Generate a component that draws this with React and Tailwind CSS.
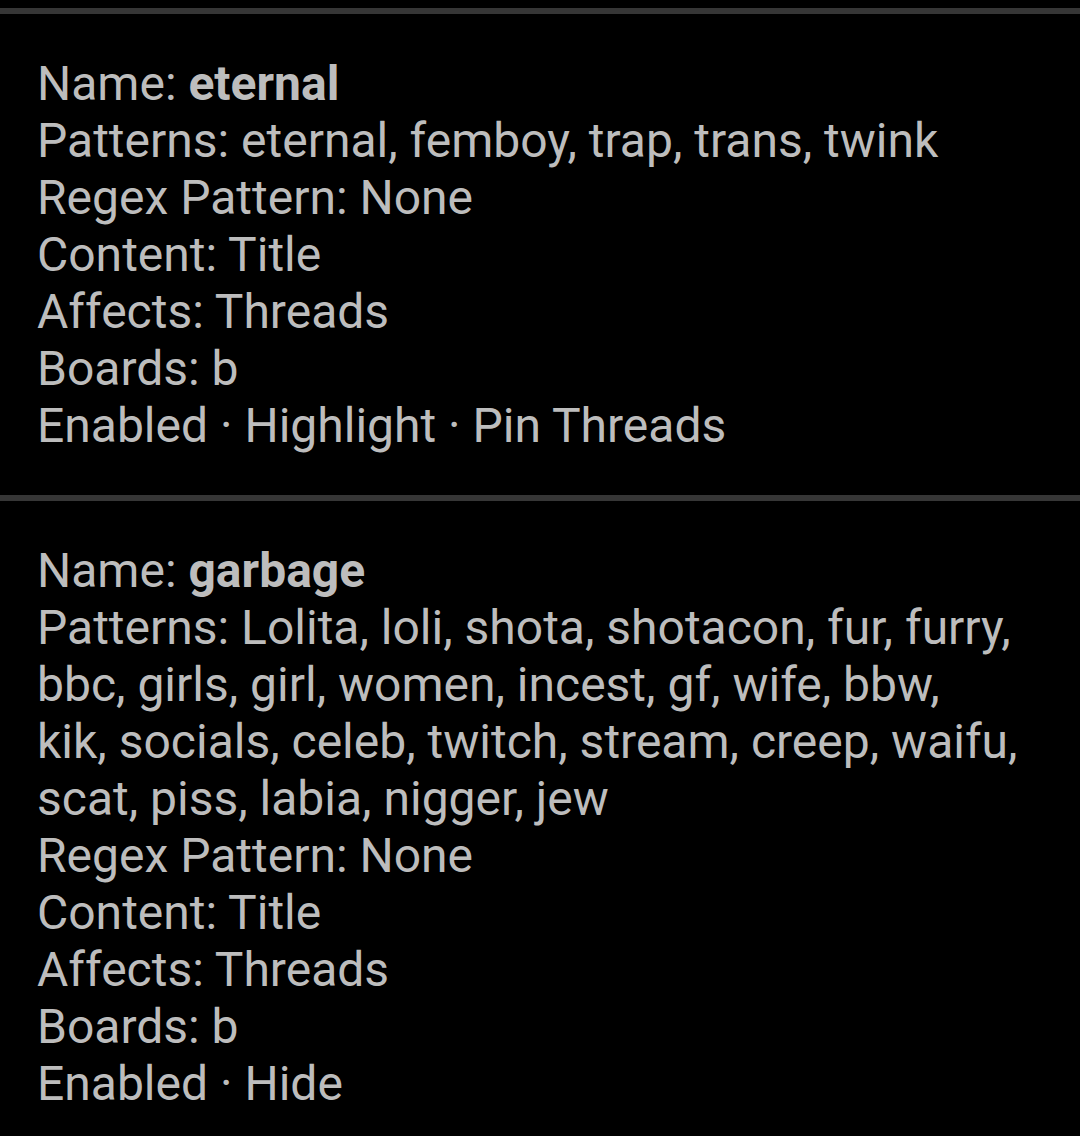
import React from 'react';

const filters = [
    {
        name: 'eternal',
        patterns: ['Patterns: eternal, femboy, trap, trans, twink'],
        regex: 'None',
        content: 'Title',
        affects: 'Threads',
        boards: 'b',
        flags: 'Enabled · Highlight · Pin Threads',
    },
    {
        name: 'garbage',
        patterns: [
            'Patterns: Lolita, loli, shota, shotacon, fur, furry,',
            'bbc, girls, girl, women, incest, gf, wife, bbw,',
            'kik, socials, celeb, twitch, stream, creep, waifu,',
            'scat, piss, labia, nigger, jew',
        ],
        regex: 'None',
        content: 'Title',
        affects: 'Threads',
        boards: 'b',
        flags: 'Enabled · Hide',
    },
];

const FilterItem = ({ filter }) => {
    return (
        <div className="border-t-[6px] border-[#363636] pt-[41px] pb-[41px] px-[37px]">
            <div>
                Name: <span className="font-bold">{filter.name}</span>
            </div>
            {filter.patterns.map((line, i) => (
                <div key={i}>{line}</div>
            ))}
            <div>Regex Pattern: {filter.regex}</div>
            <div>Content: {filter.content}</div>
            <div>Affects: {filter.affects}</div>
            <div>Boards: {filter.boards}</div>
            <div>{filter.flags}</div>
        </div>
    );
};

export default function App() {
    return (
        <div
            className="bg-black min-h-[1136px] pt-[8px] text-[#bdbdbd] text-[48px] leading-[57px] whitespace-nowrap overflow-hidden"
            style={{ fontFamily: 'Roboto, sans-serif' }}
        >
            {filters.map((f, i) => (
                <FilterItem key={i} filter={f} />
            ))}
        </div>
    );
}
